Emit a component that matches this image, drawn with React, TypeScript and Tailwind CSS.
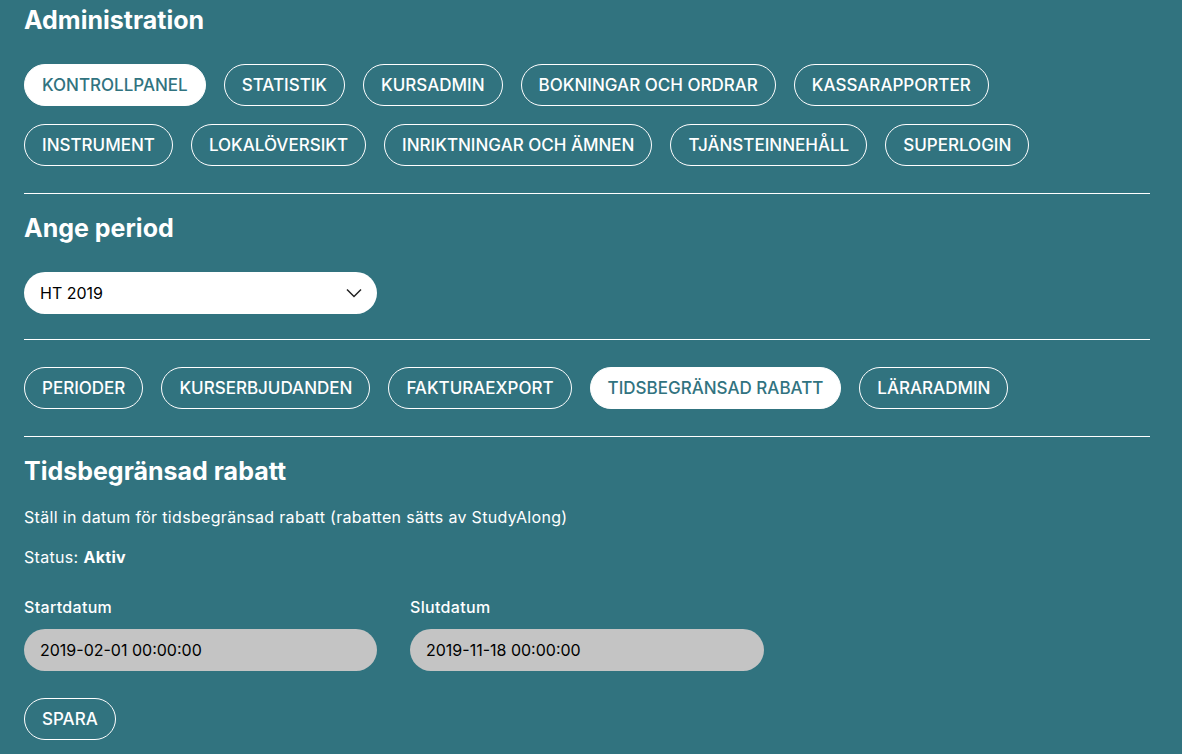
import { useState } from "react";

const topNav = [
  "KONTROLLPANEL",
  "STATISTIK",
  "KURSADMIN",
  "BOKNINGAR OCH ORDRAR",
  "KASSARAPPORTER",
  "INSTRUMENT",
  "LOKALÖVERSIKT",
  "INRIKTNINGAR OCH ÄMNEN",
  "TJÄNSTEINNEHÅLL",
  "SUPERLOGIN",
];

const subNav = ["PERIODER", "KURSERBJUDANDEN", "FAKTURAEXPORT", "TIDSBEGRÄNSAD RABATT", "LÄRARADMIN"];

const Pill = ({ label, active, onClick }: { label: string; active?: boolean; onClick?: () => void }) => (
  <button
    onClick={onClick}
    className={
      active
        ? "h-[42px] px-[17px] pt-px rounded-full border border-white bg-white text-[#31737f] text-[17px] font-medium"
        : "h-[42px] px-[17px] pt-px rounded-full border border-white text-white text-[17px] font-medium"
    }
  >
    {label}
  </button>
);

const App = () => {
  const [top, setTop] = useState("KONTROLLPANEL");
  const [sub, setSub] = useState("TIDSBEGRÄNSAD RABATT");
  const [start, setStart] = useState("2019-02-01 00:00:00");
  const [end, setEnd] = useState("2019-11-18 00:00:00");

  return (
    <div
      className="min-h-[754px] bg-[#31737f] pl-6 pr-8 pt-1 pb-4 text-white"
      style={{ fontFamily: "Inter, 'Noto Sans', sans-serif" }}
    >
      <h1 className="text-[25px] leading-8 font-bold">Administration</h1>
      <div className="mt-7 flex flex-wrap gap-[18px]">
        {topNav.map((n) => (
          <Pill key={n} label={n} active={n === top} onClick={() => setTop(n)} />
        ))}
      </div>

      <div className="mt-[27px] border-t border-white" />

      <h2 className="mt-[18px] text-[25px] leading-8 font-bold">Ange period</h2>
      <div className="mt-7 relative w-[353px]">
        <select className="appearance-none w-full h-[42px] rounded-full bg-white text-black text-[16px] pl-4 pr-10 outline-none">
          <option>HT 2019</option>
          <option>VT 2019</option>
          <option>VT 2020</option>
        </select>
        <svg
          className="absolute right-[15px] top-[16px] pointer-events-none"
          width="16"
          height="10"
          viewBox="0 0 16 10"
          fill="none"
          stroke="#222"
          strokeWidth="1.5"
        >
          <path d="M1 1.5l7 7 7-7" />
        </svg>
      </div>

      <div className="mt-[25px] border-t border-white" />

      <div className="mt-[27px] flex flex-wrap gap-[18px]">
        {subNav.map((n) => (
          <Pill key={n} label={n} active={n === sub} onClick={() => setSub(n)} />
        ))}
      </div>

      <div className="mt-[27px] border-t border-white" />

      <h2 className="mt-[18px] text-[25px] leading-8 font-bold">Tidsbegränsad rabatt</h2>
      <p className="mt-[19px] text-[16px] leading-[22px] tracking-[0.02em]">
        Ställ in datum för tidsbegränsad rabatt (rabatten sätts av StudyAlong)
      </p>
      <p className="mt-[18px] text-[16px] leading-[22px] tracking-[0.02em]">
        Status: <span className="font-bold">Aktiv</span>
      </p>

      <div className="mt-7 flex gap-[33px]">
        <div className="flex flex-col w-[353px]">
          <label className="text-[16px] leading-[22px] font-medium tracking-[0.02em]">Startdatum</label>
          <input
            className="mt-[11px] h-[42px] rounded-full bg-[#c4c4c4] text-black text-[16px] px-4 outline-none"
            value={start}
            onChange={(e) => setStart(e.target.value)}
          />
        </div>
        <div className="flex flex-col w-[354px]">
          <label className="text-[16px] leading-[22px] font-medium tracking-[0.02em]">Slutdatum</label>
          <input
            className="mt-[11px] h-[42px] rounded-full bg-[#c4c4c4] text-black text-[16px] px-4 outline-none"
            value={end}
            onChange={(e) => setEnd(e.target.value)}
          />
        </div>
      </div>

      <div className="mt-[27px]">
        <Pill label="SPARA" />
      </div>
    </div>
  );
};

export default App;
